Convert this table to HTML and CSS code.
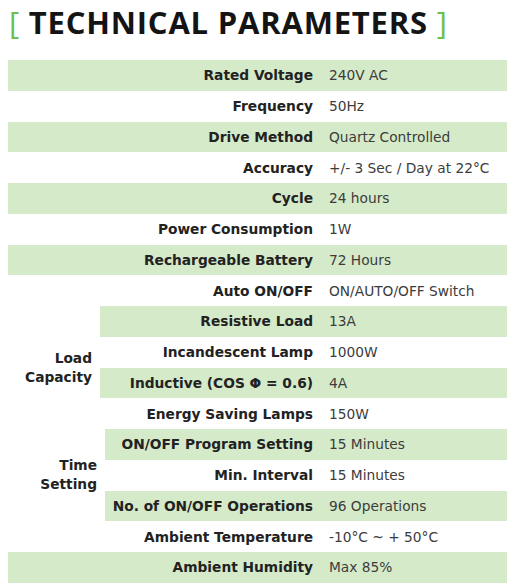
FILE: index.html
```html
<!DOCTYPE html>
<html>
<head>
<meta charset="utf-8">
<link rel="stylesheet" href="styles.css">
</head>
<body>
<h1 class="title"><span class="br">[</span> TECHNICAL PARAMETERS <span class="br">]</span></h1>
<div class="table">
  <div class="row g"><div class="k">Rated Voltage</div><div class="v">240V AC</div></div>
  <div class="row"><div class="k">Frequency</div><div class="v">50Hz</div></div>
  <div class="row g"><div class="k">Drive Method</div><div class="v">Quartz Controlled</div></div>
  <div class="row"><div class="k">Accuracy</div><div class="v">+/- 3 Sec / Day at 22°C</div></div>
  <div class="row g"><div class="k">Cycle</div><div class="v">24 hours</div></div>
  <div class="row"><div class="k">Power Consumption</div><div class="v">1W</div></div>
  <div class="row g"><div class="k">Rechargeable Battery</div><div class="v">72 Hours</div></div>
  <div class="row"><div class="k">Auto ON/OFF</div><div class="v">ON/AUTO/OFF Switch</div></div>
  <div class="group load">
    <div class="glabel">Load<br>Capacity</div>
    <div class="grows">
      <div class="row g"><div class="k">Resistive Load</div><div class="v">13A</div></div>
      <div class="row"><div class="k">Incandescent Lamp</div><div class="v">1000W</div></div>
      <div class="row g"><div class="k">Inductive (COS Φ = 0.6)</div><div class="v">4A</div></div>
      <div class="row"><div class="k">Energy Saving Lamps</div><div class="v">150W</div></div>
    </div>
  </div>
  <div class="group time">
    <div class="glabel">Time<br>Setting</div>
    <div class="grows">
      <div class="row g"><div class="k">ON/OFF Program Setting</div><div class="v">15 Minutes</div></div>
      <div class="row"><div class="k">Min. Interval</div><div class="v">15 Minutes</div></div>
      <div class="row g"><div class="k">No. of ON/OFF Operations</div><div class="v">96 Operations</div></div>
    </div>
  </div>
  <div class="row"><div class="k">Ambient Temperature</div><div class="v">-10°C ~ + 50°C</div></div>
  <div class="row g"><div class="k">Ambient Humidity</div><div class="v">Max 85%</div></div>
</div>
</body>
</html>
```
FILE: styles.css
```css
html, body {
  margin: 0;
  padding: 0;
  background: #ffffff;
}
body {
  padding: 0 0 0 8px;
  font-family: "DejaVu Sans", sans-serif;
  color: #1a1a1a;
}
.title {
  margin: 0;
  padding: 3px 0 0 1px;
  height: 60px;
  box-sizing: border-box;
  font-family: "Open Sans", sans-serif;
  font-size: 31px;
  font-weight: 700;
  letter-spacing: 0.8px;
  line-height: 38px;
  color: #141414;
  white-space: nowrap;
}
.br {
  color: #6cc04a;
  font-weight: 400;
}
.table {
  width: 499px;
  display: flex;
  flex-direction: column;
}
.row {
  --kw: 313px;
  display: grid;
  grid-template-columns: var(--kw) 1fr;
  height: 30.75px;
  align-items: center;
  font-size: 13.75px;
}
.row.g {
  background: #d5eac9;
}
.k {
  text-align: right;
  font-weight: 700;
  padding-right: 8px;
  color: #222222;
}
.v {
  padding-left: 8px;
  color: #3c3c3c;
}
.group {
  display: flex;
}
.glabel {
  display: flex;
  align-items: center;
  justify-content: flex-end;
  text-align: right;
  font-size: 13.75px;
  font-weight: 700;
  line-height: 19px;
  color: #222222;
  box-sizing: border-box;
  padding-right: 8px;
}
.grows {
  flex: 1;
  display: flex;
  flex-direction: column;
}
.load .glabel { width: 92px; }
.load .row { --kw: 221px; }
.time .glabel { width: 97px; }
.time .row { --kw: 216px; }
```
